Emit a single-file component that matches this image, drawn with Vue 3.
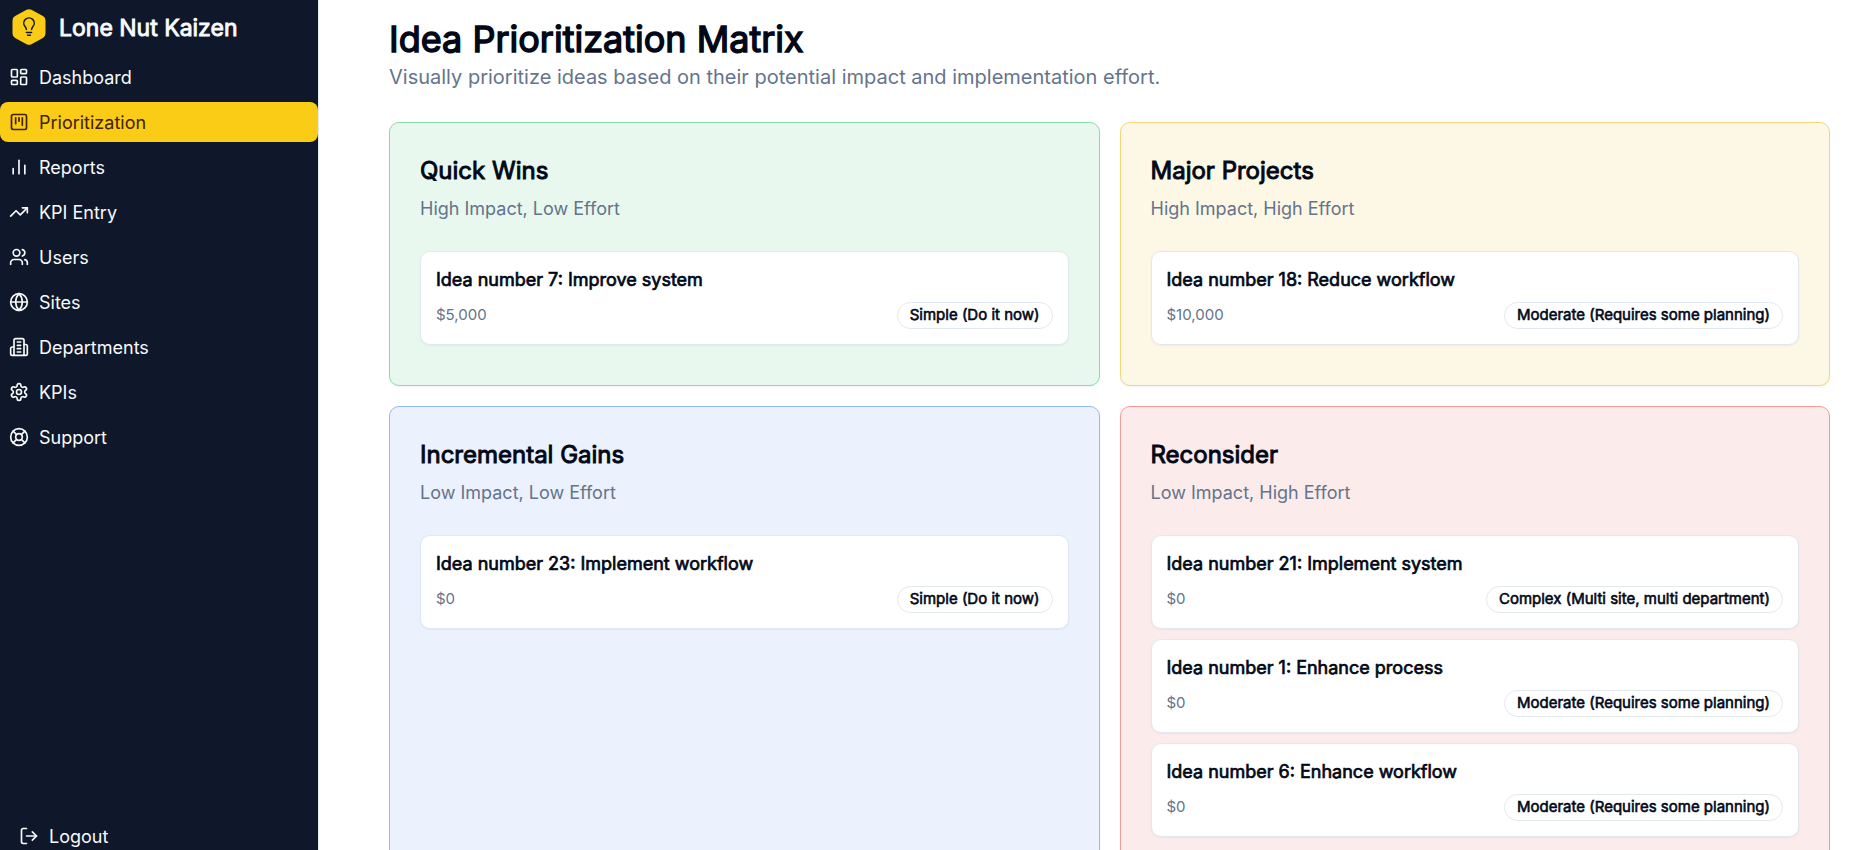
<script setup>
import { ref } from 'vue'

const active = ref('Prioritization')

const navItems = [
  {
    label: 'Dashboard',
    paths: [
      'M4 3h5a1 1 0 0 1 1 1v7a1 1 0 0 1-1 1H4a1 1 0 0 1-1-1V4a1 1 0 0 1 1-1z',
      'M15 3h5a1 1 0 0 1 1 1v3a1 1 0 0 1-1 1h-5a1 1 0 0 1-1-1V4a1 1 0 0 1 1-1z',
      'M15 12h5a1 1 0 0 1 1 1v7a1 1 0 0 1-1 1h-5a1 1 0 0 1-1-1v-7a1 1 0 0 1 1-1z',
      'M4 16h5a1 1 0 0 1 1 1v3a1 1 0 0 1-1 1H4a1 1 0 0 1-1-1v-3a1 1 0 0 1 1-1z',
    ],
  },
  {
    label: 'Prioritization',
    paths: [
      'M5 3h14a2 2 0 0 1 2 2v14a2 2 0 0 1-2 2H5a2 2 0 0 1-2-2V5a2 2 0 0 1 2-2z',
      'M8 7v7',
      'M12 7v4',
      'M16 7v9',
    ],
  },
  { label: 'Reports', paths: ['M5 20v-6', 'M12 20V4', 'M19 20V10'] },
  { label: 'KPI Entry', paths: ['M22 7l-8.5 8.5-5-5L2 17', 'M16 7h6v6'] },
  {
    label: 'Users',
    paths: [
      'M16 21v-2a4 4 0 0 0-4-4H6a4 4 0 0 0-4 4v2',
      'M5 7a4 4 0 1 0 8 0a4 4 0 1 0-8 0',
      'M22 21v-2a4 4 0 0 0-3-3.87',
      'M16 3.13a4 4 0 0 1 0 7.75',
    ],
  },
  {
    label: 'Sites',
    paths: [
      'M2 12a10 10 0 1 0 20 0a10 10 0 1 0-20 0',
      'M12 2a14.5 14.5 0 0 0 0 20 14.5 14.5 0 0 0 0-20',
      'M2 12h20',
    ],
  },
  {
    label: 'Departments',
    paths: [
      'M6 22V4a2 2 0 0 1 2-2h8a2 2 0 0 1 2 2v18Z',
      'M6 12H4a2 2 0 0 0-2 2v6a2 2 0 0 0 2 2h2',
      'M18 9h2a2 2 0 0 1 2 2v9a2 2 0 0 1-2 2h-2',
      'M10 6h4',
      'M10 10h4',
      'M10 14h4',
      'M10 18h4',
    ],
  },
  {
    label: 'KPIs',
    paths: [
      'M12.22 2h-.44a2 2 0 0 0-2 2v.18a2 2 0 0 1-1 1.73l-.43.25a2 2 0 0 1-2 0l-.15-.08a2 2 0 0 0-2.73.73l-.22.38a2 2 0 0 0 .73 2.73l.15.1a2 2 0 0 1 1 1.72v.51a2 2 0 0 1-1 1.74l-.15.09a2 2 0 0 0-.73 2.73l.22.38a2 2 0 0 0 2.73.73l.15-.08a2 2 0 0 1 2 0l.43.25a2 2 0 0 1 1 1.73V20a2 2 0 0 0 2 2h.44a2 2 0 0 0 2-2v-.18a2 2 0 0 1 1-1.73l.43-.25a2 2 0 0 1 2 0l.15.08a2 2 0 0 0 2.73-.73l.22-.39a2 2 0 0 0-.73-2.73l-.15-.08a2 2 0 0 1-1-1.74v-.5a2 2 0 0 1 1-1.74l.15-.09a2 2 0 0 0 .73-2.73l-.22-.38a2 2 0 0 0-2.73-.73l-.15.08a2 2 0 0 1-2 0l-.43-.25a2 2 0 0 1-1-1.73V4a2 2 0 0 0-2-2z',
      'M9 12a3 3 0 1 0 6 0a3 3 0 1 0-6 0',
    ],
  },
  {
    label: 'Support',
    paths: [
      'M2 12a10 10 0 1 0 20 0a10 10 0 1 0-20 0',
      'M4.93 4.93l4.24 4.24',
      'M14.83 9.17l4.24-4.24',
      'M14.83 14.83l4.24 4.24',
      'M9.17 14.83l-4.24 4.24',
      'M8 12a4 4 0 1 0 8 0a4 4 0 1 0-8 0',
    ],
  },
]

const simple = 'Simple (Do it now)'
const moderate = 'Moderate (Requires some planning)'
const complex = 'Complex (Multi site, multi department)'

const quadrants = [
  {
    title: 'Quick Wins',
    hint: 'High Impact, Low Effort',
    tone: 'green',
    ideas: [{ title: 'Idea number 7: Improve system', value: '$5,000', effort: simple }],
  },
  {
    title: 'Major Projects',
    hint: 'High Impact, High Effort',
    tone: 'yellow',
    ideas: [{ title: 'Idea number 18: Reduce workflow', value: '$10,000', effort: moderate }],
  },
  {
    title: 'Incremental Gains',
    hint: 'Low Impact, Low Effort',
    tone: 'blue',
    ideas: [{ title: 'Idea number 23: Implement workflow', value: '$0', effort: simple }],
  },
  {
    title: 'Reconsider',
    hint: 'Low Impact, High Effort',
    tone: 'red',
    ideas: [
      { title: 'Idea number 21: Implement system', value: '$0', effort: complex },
      { title: 'Idea number 1: Enhance process', value: '$0', effort: moderate },
      { title: 'Idea number 6: Enhance workflow', value: '$0', effort: moderate },
    ],
  },
]
</script>

<template>
  <div class="shell">
    <aside class="sidebar">
      <div class="brand">
        <svg class="brand-mark" viewBox="0 0 40 40" aria-hidden="true">
          <path
            d="M17.6 2.8a5 5 0 0 1 4.8 0l11.5 6.3a5 5 0 0 1 2.6 4.4v13a5 5 0 0 1-2.6 4.4l-11.5 6.3a5 5 0 0 1-4.8 0L6.1 30.9a5 5 0 0 1-2.6-4.4v-13a5 5 0 0 1 2.6-4.4z"
            fill="#facc15"
          />
          <g fill="none" stroke="#0f172a" stroke-width="1.5" stroke-linecap="round" stroke-linejoin="round">
            <path d="M17.4 22.5c0-1.4-.6-2-1.3-2.9a5.2 5.2 0 1 1 7.8 0c-.7.9-1.3 1.5-1.3 2.9" />
            <path d="M17.4 25.5h5.2" />
            <path d="M18.6 28.3h2.8" />
          </g>
        </svg>
        <span class="brand-name">Lone Nut Kaizen</span>
      </div>

      <nav class="nav" aria-label="Main">
        <a
          v-for="item in navItems"
          :key="item.label"
          href="#"
          class="nav-link"
          :class="{ active: item.label === active }"
          :aria-current="item.label === active ? 'page' : undefined"
          @click.prevent="active = item.label"
        >
          <svg class="icon" viewBox="0 0 24 24" aria-hidden="true">
            <path v-for="d in item.paths" :key="d" :d="d" />
          </svg>
          <span>{{ item.label }}</span>
        </a>
      </nav>

      <button type="button" class="logout">
        <svg class="icon" viewBox="0 0 24 24" aria-hidden="true">
          <path d="M9 21H5a2 2 0 0 1-2-2V5a2 2 0 0 1 2-2h4" />
          <path d="M16 17l5-5-5-5" />
          <path d="M21 12H9" />
        </svg>
        <span>Logout</span>
      </button>
    </aside>

    <main class="main">
      <header>
        <h1>Idea Prioritization Matrix</h1>
        <p class="lead">Visually prioritize ideas based on their potential impact and implementation effort.</p>
      </header>

      <div class="matrix">
        <section v-for="q in quadrants" :key="q.title" class="quadrant" :class="q.tone">
          <h2>{{ q.title }}</h2>
          <p class="hint">{{ q.hint }}</p>
          <ul class="ideas">
            <li v-for="idea in q.ideas" :key="idea.title" class="idea">
              <h3>{{ idea.title }}</h3>
              <div class="meta">
                <span class="value">{{ idea.value }}</span>
                <span class="badge">{{ idea.effort }}</span>
              </div>
            </li>
          </ul>
        </section>
      </div>
    </main>
  </div>
</template>

<style>
html,
body {
  margin: 0;
  overflow: hidden;
  background: #fff;
}
</style>

<style scoped>
.shell {
  display: flex;
  height: 100vh;
  overflow: hidden;
  font-family: Inter, 'Liberation Sans', sans-serif;
  color: #020817;
}

h1,
h2,
h3,
p,
ul {
  margin: 0;
  padding: 0;
  font-weight: 400;
}

h1,
h2,
h3,
.badge,
.brand-name {
  -webkit-text-stroke: 0.04em currentColor;
}

.sidebar {
  display: flex;
  flex-direction: column;
  flex: 0 0 318px;
  border-right: 1px solid #e2e8f0;
  background: #0f172a;
  color: #f8fafc;
}

.brand {
  display: flex;
  align-items: center;
  gap: 10px;
  padding: 7px 9px 10px;
}

.brand-mark {
  width: 40px;
  height: 40px;
}

.brand-name {
  padding-top: 2px;
  font-size: 23px;
  line-height: 35px;
}

.nav {
  display: flex;
  flex-direction: column;
  gap: 5px;
}

.nav-link,
.logout {
  display: flex;
  align-items: center;
  gap: 10px;
  height: 40px;
  padding: 0 9px;
  border-radius: 8px;
  font-size: 18px;
  line-height: 25px;
  color: inherit;
  text-decoration: none;
}

.nav-link.active {
  background: #facc15;
  color: #422006;
}

.logout {
  margin: auto 10px -6px;
  border: 0;
  background: none;
  font-family: inherit;
  cursor: pointer;
}

.icon {
  flex: none;
  width: 20px;
  height: 20px;
  fill: none;
  stroke: currentColor;
  stroke-width: 2;
  stroke-linecap: round;
  stroke-linejoin: round;
}

.main {
  flex: 1;
  min-width: 0;
  padding: 17px 21px 20px 70px;
}

h1 {
  font-size: 36px;
  line-height: 45px;
}

.lead {
  font-size: 20px;
  line-height: 30px;
  color: #64748b;
}

.matrix {
  display: grid;
  grid-template-columns: repeat(2, minmax(0, 1fr));
  gap: 20px;
  margin-top: 30px;
}

.quadrant {
  padding: 30px 30px 40px;
  border: 1px solid;
  border-radius: 10px;
  box-shadow: 0 1px 2px rgba(0, 0, 0, 0.05);
}

.green {
  background: #e8f8ef;
  border-color: #86dfa6;
}

.yellow {
  background: #fdf7e5;
  border-color: #f3d67a;
}

.blue {
  background: #ebf1fd;
  border-color: #92b9f8;
}

.red {
  background: #fcebeb;
  border-color: #f59a9a;
}

h2 {
  font-size: 24px;
  line-height: 35px;
}

.hint {
  margin: 8px 0 30px;
  font-size: 18px;
  line-height: 25px;
  color: #64748b;
}

.ideas {
  display: flex;
  flex-direction: column;
  gap: 10px;
  list-style: none;
}

.idea {
  padding: 15px;
  border: 1px solid #e2e8f0;
  border-radius: 10px;
  background: #fff;
  box-shadow: 0 1px 2px rgba(0, 0, 0, 0.05);
}

h3 {
  font-size: 18px;
  line-height: 25px;
}

.meta {
  display: flex;
  align-items: center;
  justify-content: space-between;
  margin-top: 10px;
}

.value,
.badge {
  padding: 2px 0 3px;
  font-size: 15px;
  line-height: 20px;
}

.value {
  color: #64748b;
}

.badge {
  padding-inline: 12px;
  border: 1px solid #e2e8f0;
  border-radius: 14px;
}
</style>
